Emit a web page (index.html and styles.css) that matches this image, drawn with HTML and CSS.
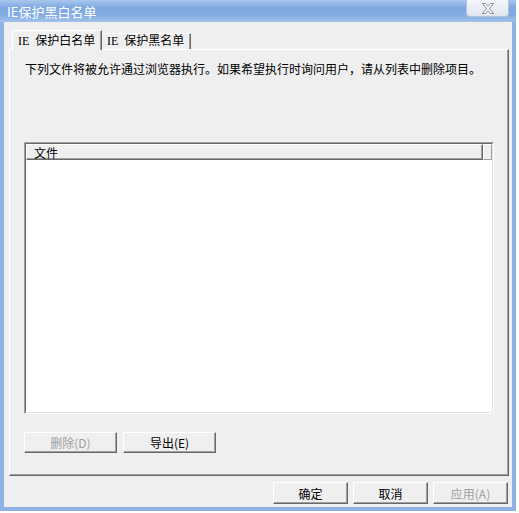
FILE: index.html
```html
<!DOCTYPE html>
<html lang="zh-CN">
<head>
  <meta charset="UTF-8" />
  <title>IE保护黑白名单</title>
  <link rel="stylesheet" href="styles.css">
</head>
<body>

  <div class="window">
    <div class="titlebar">
      <span class="title">IE保护黑白名单</span>
      <button class="close" aria-label="关闭">
        <svg width="14" height="11" viewBox="0 0 14 11">
          <path d="M1.5 0.5h3l2.5 3 2.5-3h3l-4 5 4 5h-3l-2.5-3-2.5 3h-3l4-5z" fill="#fff" stroke="#8a8f99" stroke-width="1" stroke-linejoin="round"/>
        </svg>
      </button>
    </div>

    <div class="client">
      <div class="tabs">
        <div class="tab active">IE 保护白名单</div>
        <div class="tab">IE 保护黑名单</div>
      </div>

      <div class="panel">
        <p class="intro">下列文件将被允许通过浏览器执行。如果希望执行时询问用户，请从列表中删除项目。</p>

        <div class="list">
          <div class="list-frame">
            <div class="list-header">
              <div class="col">文件</div>
              <div class="col-rest"></div>
            </div>
            <div class="list-body"></div>
          </div>
        </div>

        <div class="panel-buttons">
          <button class="btn wide" disabled>删除(D)</button>
          <button class="btn wide">导出(E)</button>
        </div>
      </div>

      <div class="dialog-buttons">
        <button class="btn">确定</button>
        <button class="btn">取消</button>
        <button class="btn" disabled>应用(A)</button>
      </div>
    </div>
  </div>

</body>
</html>
```

FILE: styles.css
```css
* {
  box-sizing: border-box;
}

body {
  margin: 0;
  background: #fff;
  font-family: "Noto Sans CJK SC", sans-serif;
  font-size: 12px;
  color: #000;
}

.window {
  width: 516px;
  height: 511px;
  display: flex;
  flex-direction: column;
  border: 4px solid #8db2e3;
  border-top: none;
  background: #efefef;
}

.titlebar {
  height: 22px;
  margin: 0 -4px;
  display: flex;
  align-items: flex-start;
  justify-content: space-between;
  background: linear-gradient(to bottom, #a9c7ee 0%, #7ea8e0 35%, #84ace2 70%, #a3c2ea 100%);
}

.title {
  margin: 4px 0 0 7px;
  font-size: 13px;
  line-height: 16px;
  color: #fff;
}

.close {
  width: 43px;
  height: 17px;
  margin-right: 7px;
  padding: 0;
  display: flex;
  align-items: center;
  justify-content: center;
  background: linear-gradient(to bottom, #f3f6fb, #dfe6f0);
  border: 1px solid #b5c3d8;
  border-top: none;
  border-radius: 0 0 4px 4px;
}

.client {
  flex: 1;
  padding: 8px 3px 0 5px;
  display: flex;
  flex-direction: column;
}

.tabs {
  height: 19px;
  padding-left: 3px;
  display: flex;
  align-items: flex-end;
}

.tab {
  height: 16px;
  padding: 0 2px 0 5px;
  overflow: hidden;
  font-family: "Liberation Serif", "Noto Sans CJK SC", serif;
  line-height: 15px;
  word-spacing: 3px;
  white-space: nowrap;
  background: #efefef;
  border-top: 1px solid #fff;
  border-left: 1px solid #fff;
  border-right: 1px solid #696969;
  box-shadow: inset -1px 0 0 #a0a0a0;
}

.tab.active {
  position: relative;
  z-index: 1;
  height: 20px;
  width: 90px;
  margin-bottom: -1px;
  padding-top: 3px;
}

.tab:not(.active) {
  width: 89px;
  border-left: none;
}

.panel {
  height: 427px;
  padding: 0 14px;
  display: flex;
  flex-direction: column;
  border: 1px solid #fff;
  border-right-color: #696969;
  border-bottom-color: #696969;
  box-shadow: inset -1px -1px 0 #a0a0a0;
}

.intro {
  margin: 12px 0 0 1px;
  line-height: 14px;
  white-space: nowrap;
}

.list {
  width: 470px;
  height: 272px;
  margin-top: 66px;
  border: 1px solid;
  border-color: #a0a0a0 #fff #fff #a0a0a0;
}

.list-frame {
  height: 100%;
  display: flex;
  flex-direction: column;
  border: 1px solid;
  border-color: #696969 #e3e3e3 #e3e3e3 #696969;
  background: #fff;
}

.list-header {
  height: 16px;
  display: flex;
  background: #efefef;
}

.col {
  width: 457px;
  padding-left: 7px;
  line-height: 15px;
  border-top: 1px solid #fff;
  border-left: 1px solid #fff;
  border-right: 1px solid #696969;
  border-bottom: 1px solid #696969;
  box-shadow: inset -1px -1px 0 #a0a0a0;
}

.col-rest {
  flex: 1;
  border-top: 1px solid #fff;
  border-left: 1px solid #fff;
  border-right: 1px solid #a0a0a0;
  border-bottom: 1px solid #a0a0a0;
}

.list-body {
  flex: 1;
}

.panel-buttons {
  margin-top: 18px;
  display: flex;
  gap: 6px;
}

.btn {
  width: 75px;
  height: 22px;
  padding: 0;
  font-family: "Noto Sans CJK SC", sans-serif;
  font-size: 12px;
  color: #000;
  background: #efefef;
  border: 1px solid;
  border-color: #fff #696969 #696969 #fff;
  box-shadow: inset -1px -1px 0 #a0a0a0;
}

.btn.wide {
  width: 93px;
  height: 21px;
}

.btn:disabled {
  color: #a0a0a0;
}

.dialog-buttons {
  margin-top: 6px;
  padding-right: 1px;
  display: flex;
  justify-content: flex-end;
  gap: 5px;
}
```
